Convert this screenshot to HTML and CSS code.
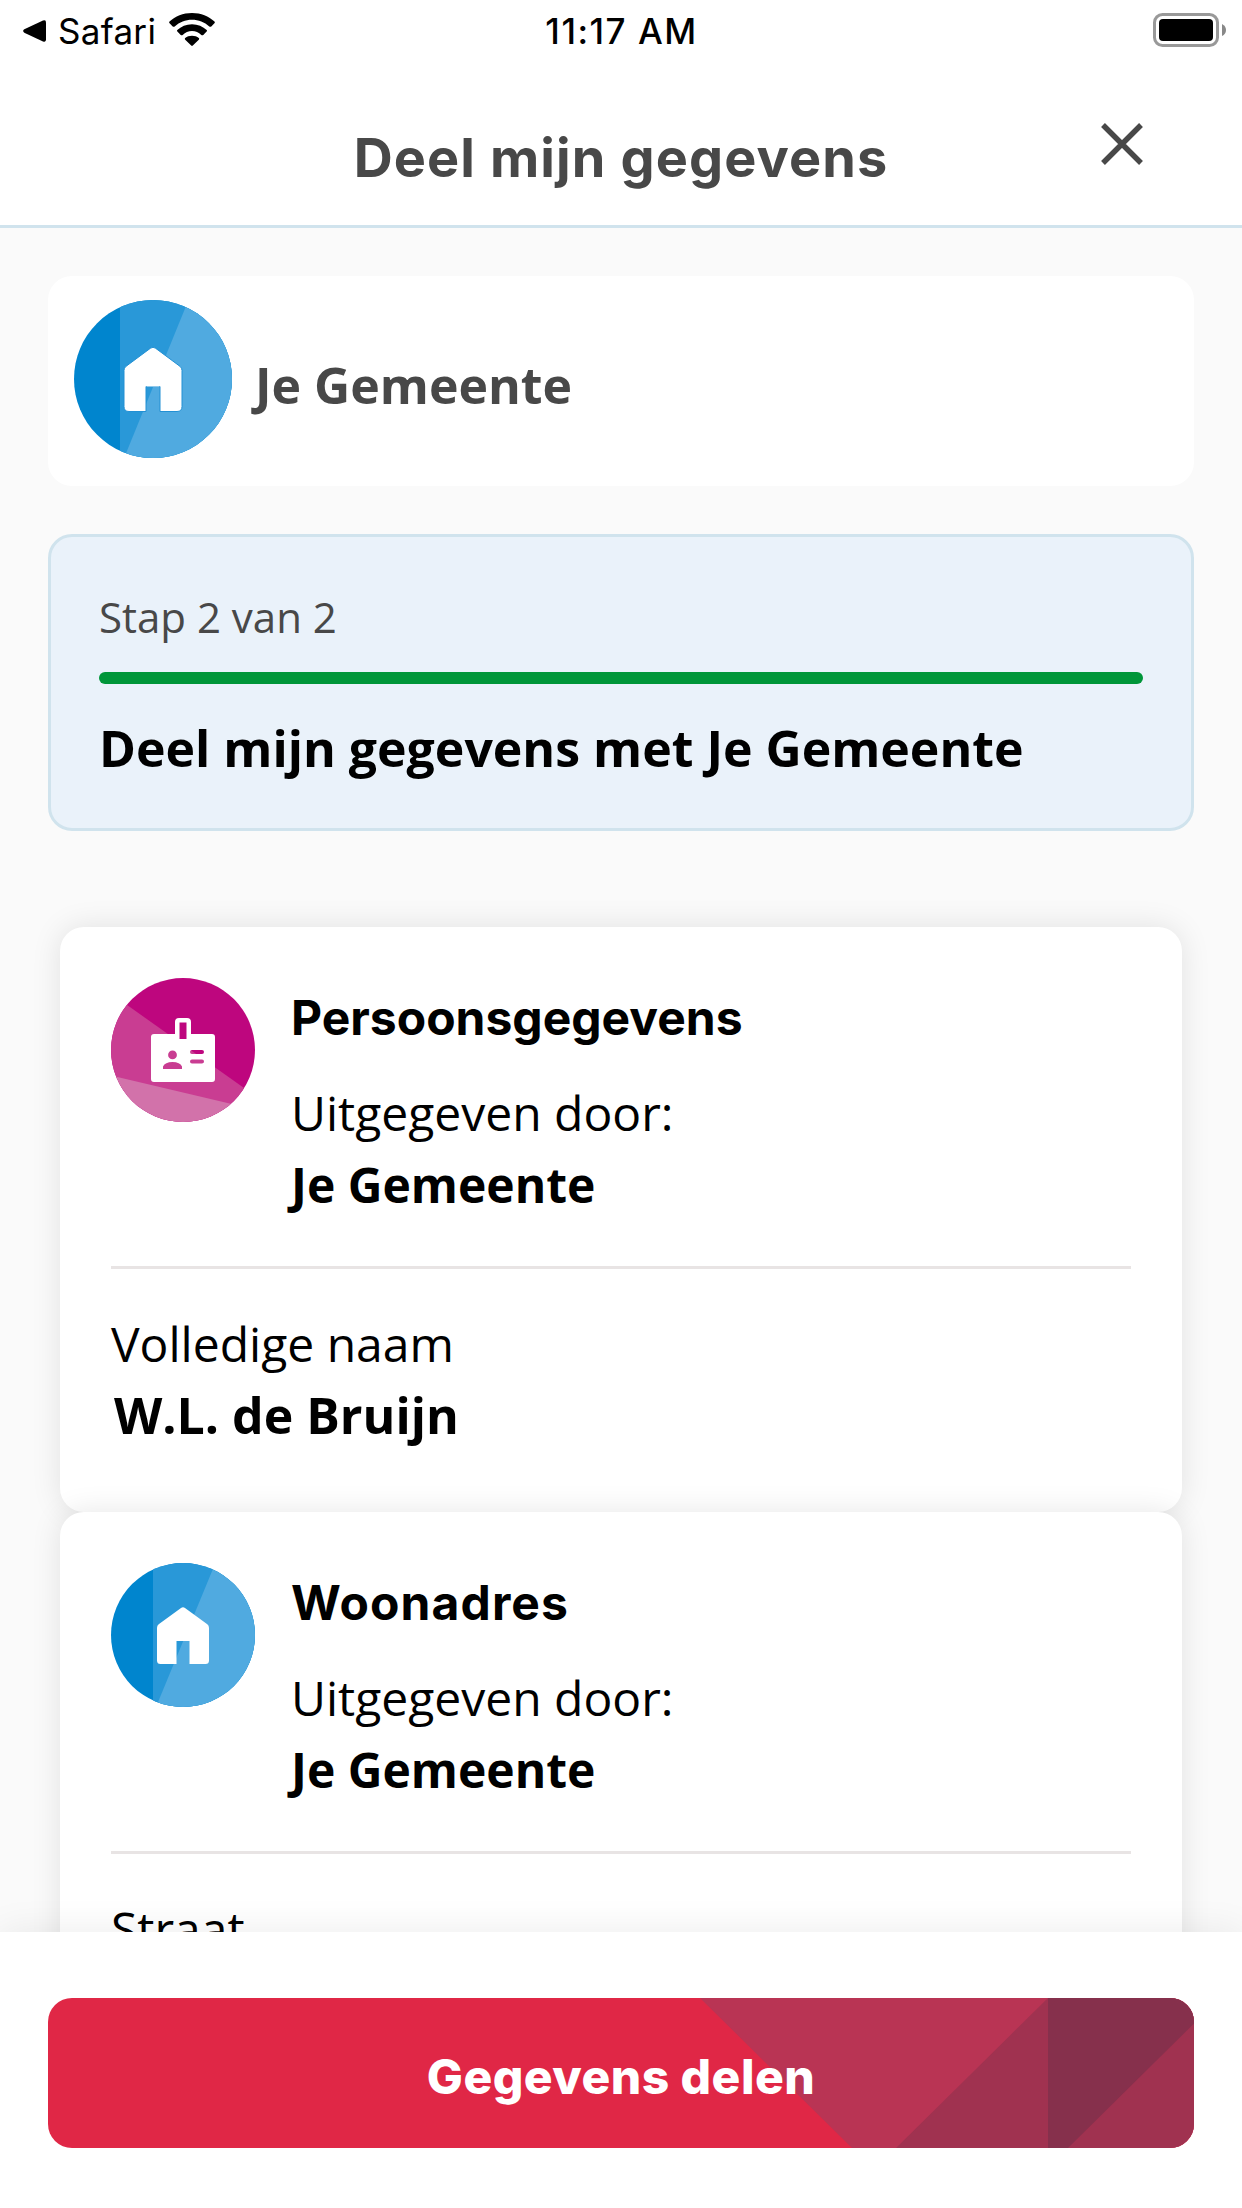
FILE: index.html
```html
<!DOCTYPE html>
<html lang="nl">
<head>
<meta charset="utf-8">
<title>Deel mijn gegevens</title>
<link rel="stylesheet" href="styles.css">
</head>
<body>
<div class="screen">
  <div class="status">
    <div class="status-left">
      <svg class="back" width="23" height="22" viewBox="0 0 23 22"><path d="M1.3 9.3 20 .6Q23-.6 23 2.4V19.6Q23 22.6 20 21.4L1.3 12.7Q-1 11 1.3 9.3Z"/></svg>
      <span class="status-app">Safari</span>
      <svg class="wifi" width="46" height="33" viewBox="0 0 46 33"><path d="M23 0C32 0 39.700 3.300 45.500 8.600Q46.200 9.500 45.400 10.300L42.300 13.400Q41.300 14.200 40.300 13.400C35.500 9.100 29.600 6.700 23 6.700S10.500 9.100 5.700 13.400Q4.700 14.200 3.700 13.400L.6 10.300Q-.2 9.500.5 8.600C6.300 3.300 14 0 23 0ZM23 11.200C28.800 11.200 33.900 13.500 37.700 16.900Q38.400 17.800 37.600 18.600L34.300 21.900Q33.300 22.700 32.300 21.900C29.700 19.500 26.600 18 23 18S16.300 19.500 13.700 21.900Q12.700 22.700 11.700 21.900L8.400 18.600Q7.600 17.800 8.300 16.900C12.100 13.500 17.200 11.200 23 11.200ZM23 22.700C25.700 22.700 28 23.600 29.800 25Q30.600 25.800 29.800 26.700L23.800 32.600Q23 33.200 22.200 32.600L16.200 26.700Q15.400 25.800 16.200 25C18 23.600 20.300 22.700 23 22.700Z"/></svg>
    </div>
    <span class="status-time">11:17 AM</span>
    <svg class="battery" width="73" height="34" viewBox="0 0 73 34"><rect x="1.500" y="1.500" width="63" height="31" rx="8" fill="#fff" stroke="#999" stroke-width="3"/><rect x="6" y="6" width="54" height="22" rx="4"/><path d="M69 11Q73 13 73 17T69 23Z" fill="#888"/></svg>
  </div>

  <header class="header">
    <h1 class="header-title">Deel mijn gegevens</h1>
    <svg class="close" width="42" height="42" viewBox="0 0 42 42"><path d="M2 2 40 40M40 2 2 40" fill="none" stroke="#484848" stroke-width="5.400"/></svg>
  </header>

  <main class="content">
    <section class="provider">
      <svg class="provider-logo" width="158" height="158" viewBox="0 0 158 158">
        <clipPath id="round-large"><circle cx="79" cy="79" r="79"/></clipPath>
        <g clip-path="url(#round-large)">
          <path fill="#0085ce" d="M0 0H158V158H0Z"/>
          <path fill="#2998d8" d="M46 0H158V158H46Z"/>
          <path fill="#50aae0" d="M114.500 0H158V158H50.100Z"/>
        </g>
        <path fill="#fff" stroke="#2290d4" stroke-width="1" d="M76.500 48.200Q79 46.300 81.500 48.200L106.200 66.500Q108 68 108 70.500V106.500Q108 111.500 103 111.500H86V86.500H72V111.500H55Q50 111.500 50 106.500V70.500Q50 68 51.800 66.500Z"/>
        <path d="M72.500 86H85.500" stroke="#fff" stroke-width="1"/>
      </svg>
      <span class="provider-name">Je Gemeente</span>
    </section>

    <section class="step">
      <p class="step-count">Stap 2 van 2</p>
      <div class="progress"></div>
      <h2 class="step-title">Deel mijn gegevens met Je Gemeente</h2>
    </section>

    <div class="cards">
      <article class="card">
        <div class="card-head">
          <svg class="card-icon" width="144" height="144" viewBox="0 0 144 144">
            <clipPath id="round-small"><circle cx="72" cy="72" r="72"/></clipPath>
            <g clip-path="url(#round-small)">
              <path fill="#be067e" d="M0 0H144V144H0Z"/>
              <path fill="#c93d92" d="M0 15.600 144 117.800V144H0Z"/>
              <path fill="#d272aa" d="M0 97.600 144 131.400V144H0Z"/>
            </g>
            <path fill="#fff" fill-rule="evenodd" d="M64 56V44Q64 40 68 40H76Q80 40 80 44V56H101Q104 56 104 59V101Q104 104 101 104H43Q40 104 40 101V59Q40 56 43 56ZM68.500 44.500V61H75.500V44.500ZM61.500 72.500A4.400 4.400 0 1 0 61.500 81.300A4.400 4.400 0 1 0 61.500 72.500ZM52 91H71V88.500Q69 84 61.500 84T52 88.500ZM81 72Q79 72 79 74T81 76H91Q93 76 93 74T91 72ZM81 81.500Q79 81.500 79 83.500T81 85.500H91Q93 85.500 93 83.500T91 81.500Z"/>
          </svg>
          <div class="card-text">
            <h3 class="card-title">Persoonsgegevens</h3>
            <p class="label">Uitgegeven door:</p>
            <p class="issuer">Je Gemeente</p>
          </div>
        </div>
        <div class="attribute">
          <p class="label">Volledige naam</p>
          <p class="value">W.L. de Bruijn</p>
        </div>
      </article>

      <article class="card">
        <div class="card-head">
          <svg class="card-icon" width="144" height="144" viewBox="0 0 144 144">
            <g clip-path="url(#round-small)">
              <path fill="#0085ce" d="M0 0H144V144H0Z"/>
              <path fill="#2998d8" d="M42 0H144V144H42Z"/>
              <path fill="#50aae0" d="M104.400 0H144V144H45Z"/>
            </g>
            <path fill="#fff" d="M70 45Q72 43.400 74 45L96.300 61.300Q98 62.600 98 65V97.500Q98 101 94.500 101H78.500V78H65.500V101H49.500Q46 101 46 97.500V65Q46 62.600 47.700 61.300Z"/>
          </svg>
          <div class="card-text">
            <h3 class="card-title card-title-address">Woonadres</h3>
            <p class="label">Uitgegeven door:</p>
            <p class="issuer">Je Gemeente</p>
          </div>
        </div>
        <div class="attribute">
          <p class="label">Straat</p>
        </div>
      </article>
    </div>
  </main>

  <footer class="footer">
    <button class="share" type="button">
      <svg class="share-art" width="1146" height="150" viewBox="0 0 1146 150" preserveAspectRatio="none">
        <path fill="#b93454" d="M652 0H1146V150H804Z"/>
        <path fill="#a03250" d="M1000 0H1146V150H848Z"/>
        <path fill="#86304c" d="M1000 0H1146V25.500L1020 150H1000Z"/>
      </svg>
      <span class="share-label">Gegevens delen</span>
    </button>
  </footer>
</div>
</body>
</html>
```

FILE: styles.css
```css
* { box-sizing: border-box; }

body {
  margin: 0;
  font-family: "Open Sans", "Noto Sans", sans-serif;
  color: #000;
}

h1, h2, h3, p { margin: 0; }
svg { display: block; flex: none; }

.screen {
  display: flex;
  flex-direction: column;
  width: 1242px;
  height: 2208px;
  overflow: hidden;
  background: #fafafa;
}

.status {
  display: grid;
  grid-template-columns: 1fr auto 1fr;
  align-items: center;
  flex: none;
  height: 62px;
  padding: 0 16px 0 23px;
  background: #fff;
  font: 400 35px/62px "Inter", "Liberation Sans", sans-serif;
}
.status-left { display: flex; align-items: center; }
.status-app { margin-left: 12px; letter-spacing: .3px; }
.wifi { margin: -3px 0 0 13px; }
.status-time { font-weight: 500; margin-left: -6px; letter-spacing: 1.5px; }
.battery { justify-self: end; margin-top: -2px; }

.header {
  display: grid;
  grid-template-columns: 1fr auto 1fr;
  flex: none;
  height: 166px;
  padding: 60px 99px 0;
  background: #fff;
  border-bottom: 3px solid #d0e3ed;
}
.header-title {
  grid-column: 2;
  font: 700 54px/72px "Inter", "Liberation Sans", sans-serif;
  letter-spacing: 1.1px;
  color: #484848;
}
.close { justify-self: end; margin-top: 1px; }

.content {
  flex: 1;
  min-height: 0;
  overflow: hidden;
  padding: 48px 48px 0;
}

.provider {
  display: flex;
  height: 210px;
  padding: 24px 26px;
  background: #fff;
  border-radius: 24px;
}
.provider-name {
  margin: 49px 0 0 23px;
  font-size: 50px;
  line-height: 72px;
  font-weight: 700;
  color: #484848;
}

.step {
  margin-top: 48px;
  height: 297px;
  padding: 50px 48px 0;
  background: #eaf2fa;
  border: 3px solid #d0e3ed;
  border-radius: 24px;
}
.step-count { font-size: 42px; line-height: 60px; color: #484848; }
.progress {
  height: 12px;
  margin-top: 25px;
  border-radius: 6px;
  background: #009639;
}
.step-title { margin-top: 28px; font-size: 50px; line-height: 72px; font-weight: 700; }

.cards { margin: 96px 12px 0; }
.card {
  height: 585px;
  padding: 51px;
  background: #fff;
  border-radius: 24px;
  box-shadow: 0 0 30px rgba(0, 0, 0, .1);
}
.card-head {
  display: flex;
  gap: 36px;
  height: 291px;
  border-bottom: 3px solid #e8e4e4;
}
.card-title {
  margin: 4px 0 23px;
  font: 700 48px/72px "Inter", "Liberation Sans", sans-serif;
}
.card-title-address { letter-spacing: 1.1px; }
.label, .issuer { font-size: 48px; line-height: 72px; }
.issuer { font-weight: 700; }
.attribute { padding-top: 39px; }
.value { margin: -1px 0 0 3px; font-size: 50px; line-height: 72px; font-weight: 700; }

.footer {
  position: relative;
  flex: none;
  height: 276px;
  padding: 66px 48px 0;
  background: #fff;
  box-shadow: 0 0 36px rgba(0, 0, 0, .08);
}
.share {
  position: relative;
  display: block;
  width: 100%;
  height: 150px;
  padding: 8px 0 0;
  overflow: hidden;
  border: 0;
  border-radius: 24px;
  background: #e02746;
  color: #fff;
  font: 800 48px/72px "Inter", "Liberation Sans", sans-serif;
  letter-spacing: .45px;
}
.share-art { position: absolute; inset: 0; }
.share-label { position: relative; }
```
